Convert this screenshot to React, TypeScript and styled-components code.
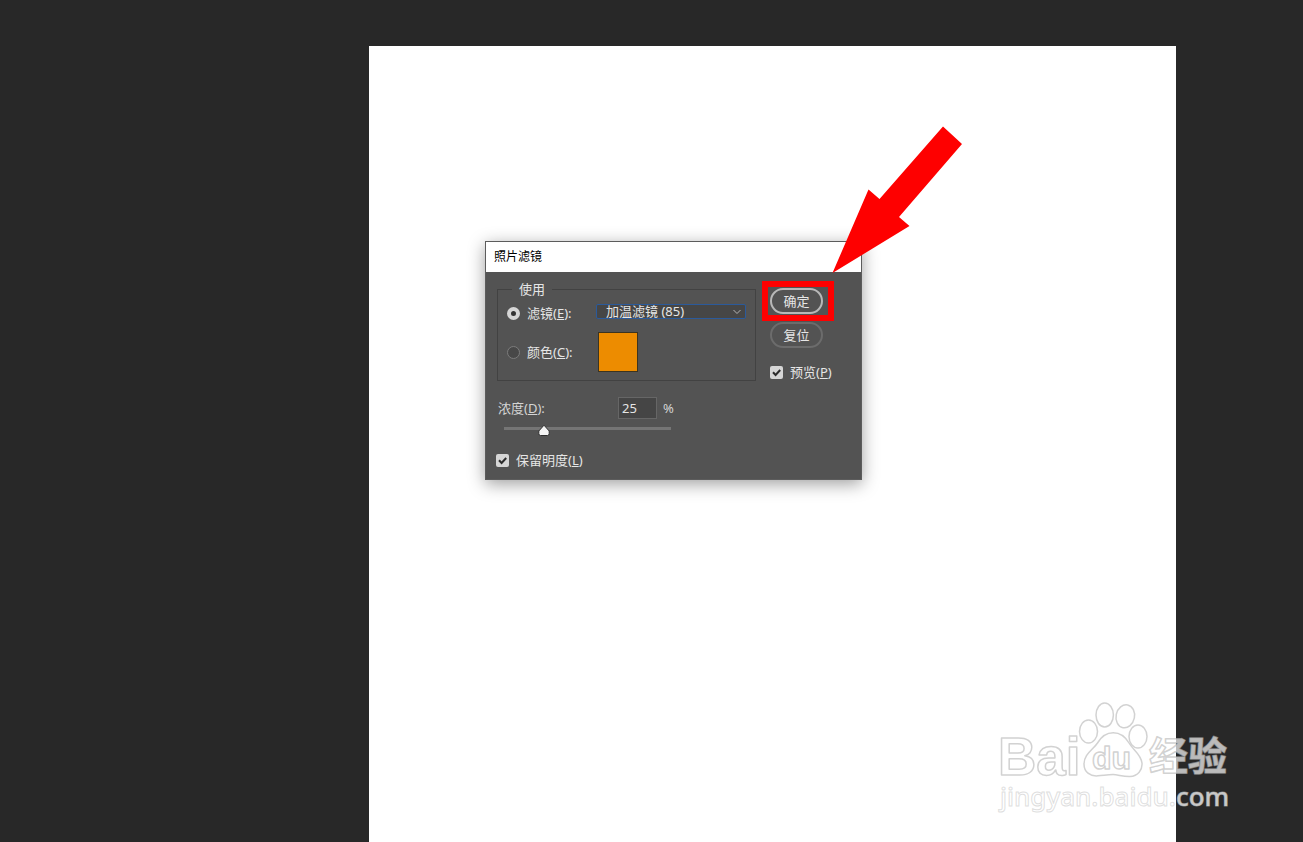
import React, { useState } from "react";
import styled, { createGlobalStyle } from "styled-components";

const GlobalStyle = createGlobalStyle`
  *, *::before, *::after { box-sizing: border-box; }
  body {
    margin: 0;
    background: #282828;
    font-family: "Noto Sans", "Noto Sans CJK SC", sans-serif;
    font-size: 13px;
    line-height: 18px;
  }
  button, input, select { font: inherit; color: inherit; margin: 0; }
`;

const Workspace = styled.main`
  position: relative;
  display: flex;
  min-height: 100vh;
  padding: 46px 127px 0 369px;
  background: #282828;
  overflow: hidden;
`;

const Artboard = styled.section`
  flex: 1;
  padding: 195px 0 0 116px;
  background: #fff;
`;

const Dialog = styled.div`
  position: relative;
  width: 377px;
  border: 1px solid #5c5c5c;
  background: #535353;
  color: #e6e6e6;
  box-shadow: 0 4px 16px rgba(0, 0, 0, 0.38);
`;

const TitleBar = styled.h1`
  margin: 0;
  padding: 0 8px;
  background: #fff;
  color: #000;
  font-size: 12px;
  font-weight: 400;
  line-height: 30px;
`;

const Body = styled.form`
  display: flex;
  gap: 14px;
  padding: 8px 10px 10px;
`;

const Settings = styled.div`
  width: 260px;
`;

const Actions = styled.div`
  display: flex;
  flex-direction: column;
  align-items: flex-start;
  padding-top: 8px;
`;

const Group = styled.fieldset`
  display: grid;
  grid-template-columns: 89px auto;
  grid-template-rows: 30px 40px;
  row-gap: 4px;
  justify-content: start;
  align-items: center;
  margin: 0 0 0 1px;
  padding: 0 9px 8px;
  border: 1px solid #424242;
`;

const Legend = styled.legend`
  margin-left: 5px;
  padding: 0 7px;
`;

const Choice = styled.label`
  display: flex;
  align-items: center;
  gap: 7px;
  height: 18px;
  white-space: nowrap;
`;

const Radio = styled.input.attrs({ type: "radio" })`
  appearance: none;
  width: 13px;
  height: 13px;
  border: 1px solid #7c7c7c;
  border-radius: 50%;
  background: #484848;
  &:checked {
    border: 4px solid #d6d6d6;
    background: #333;
  }
`;

const Select = styled.select`
  appearance: none;
  display: block;
  width: 150px;
  height: 15px;
  padding: 0 16px 0 9px;
  border: 1px solid #2b5a9b;
  border-radius: 2px;
  background: #464646;
  line-height: 13px;
  outline: none;
`;

const SelectWrap = styled.div`
  position: relative;
  align-self: start;
  padding-top: 6px;
`;

const Chevron = styled.svg`
  position: absolute;
  right: 4px;
  bottom: 3px;
  pointer-events: none;
`;

const Swatch = styled.button`
  width: 40px;
  height: 40px;
  margin-left: 2px;
  padding: 0;
  border: 1px solid #3c3420;
  background: #ed8c00;
`;

const DensityRow = styled.div`
  display: grid;
  grid-template-columns: 120px 39px auto;
  align-items: center;
  margin-top: 16px;
  padding-left: 2px;
  color: #d4d4d4;
`;

const DensityInput = styled.input`
  width: 39px;
  height: 22px;
  padding: 0 3px;
  border: 1px solid #666;
  background: #454545;
  color: #e6e6e6;
`;

const Unit = styled.span`
  padding-left: 6px;
`;

const SliderBox = styled.div`
  position: relative;
  width: 167px;
  height: 13px;
  margin: 3px 0 16px 8px;
`;

const Range = styled.input.attrs({ type: "range" })`
  appearance: none;
  display: block;
  width: 100%;
  height: 13px;
  background: linear-gradient(#757575, #757575) center / 100% 3px no-repeat;
  &::-webkit-slider-thumb {
    appearance: none;
    width: 12px;
    height: 13px;
    background: transparent;
  }
`;

const Thumb = styled.svg`
  position: absolute;
  top: 2px;
  margin-left: -5px;
  pointer-events: none;
`;

const Tick = styled.input.attrs({ type: "checkbox" })`
  appearance: none;
  position: absolute;
  inset: 0;
  width: 13px;
  height: 13px;
  border-radius: 2px;
  background: #484848;
  &:checked { background: #d6d6d6; }
`;

const TickBox = styled.span`
  position: relative;
  width: 13px;
  height: 13px;
  svg {
    position: absolute;
    inset: 0;
    pointer-events: none;
  }
`;

const PillButton = styled.button<{ $primary?: boolean }>`
  width: 53px;
  height: 26px;
  margin-bottom: 8px;
  padding: 0;
  border: 2px solid ${(p) => (p.$primary ? "#b8b8b8" : "#6c6c6c")};
  border-radius: 13px;
  background: transparent;
  line-height: 20px;
`;

const PreviewSlot = styled.div`
  margin-top: 7px;
`;

const HighlightBox = styled.div`
  position: absolute;
  left: 276px;
  top: 39px;
  width: 72px;
  height: 40px;
  border: 6px solid #fe0000;
  pointer-events: none;
`;

const Arrow = styled.svg`
  position: absolute;
  left: 346px;
  top: -116px;
  pointer-events: none;
`;

const Watermark = styled.svg`
  position: absolute;
  right: 63px;
  bottom: 22px;
`;

interface CheckBoxProps {
  id: string;
  checked: boolean;
  onChange: (value: boolean) => void;
}

function CheckBox({ id, checked, onChange }: CheckBoxProps) {
  return (
    <TickBox>
      <Tick id={id} checked={checked} onChange={(e) => onChange(e.target.checked)} />
      {checked && (
        <svg width="13" height="13" viewBox="0 0 13 13" fill="none" stroke="#2c2c2c" strokeWidth="2">
          <path d="M3 6.2 5.6 9 10.2 4" />
        </svg>
      )}
    </TickBox>
  );
}

function BaiduMark() {
  return (
    <Watermark width="260" height="130" viewBox="0 0 260 130" aria-label="Baidu">
      <g fill="#fff" fillOpacity="0.7" stroke="#b4b4b4" strokeOpacity="0.6" strokeWidth="1.5" strokeLinejoin="round">
        <ellipse cx="108.5" cy="41.5" rx="9" ry="11.5" />
        <ellipse cx="124.7" cy="25" rx="8.7" ry="12" />
        <ellipse cx="145.3" cy="26.3" rx="9.2" ry="11.6" transform="rotate(12 145.3 26.3)" />
        <ellipse cx="158" cy="46.5" rx="9" ry="11.5" />
        <path d="M133.3 42.7C126 42.7 121 47 117.5 53C113 60 104 64 104 74C104 82 110 86.5 118 85.8C124 85.300 128 84.500 133 84.500C138 84.500 143 86.800 150 86.500C158 86 162.500 80 162 73C161 64 153 60 149 53C145.500 47 141 42.700 133.300 42.700Z" />
        <text x="18" y="85" fontFamily='"Liberation Sans", sans-serif' fontWeight="700" fontSize="53">Bai</text>
        <text x="112" y="79" fontFamily='"Liberation Sans", sans-serif' fontWeight="700" fontSize="32">du</text>
        <text x="169" y="80" fontFamily='"Noto Sans CJK SC", sans-serif' fontWeight="700" fontSize="39">经验</text>
      </g>
      <g fill="#fff" fillOpacity="0.75" stroke="#c4c4c4" strokeOpacity="0.55">
        <text x="20" y="116" fontFamily='"Noto Sans", sans-serif' fontWeight="500" fontSize="26">jingyan.baidu.com</text>
      </g>
    </Watermark>
  );
}

export default function App() {
  const [mode, setMode] = useState("filter");
  const [density, setDensity] = useState(25);
  const [preview, setPreview] = useState(true);
  const [keep, setKeep] = useState(true);

  return (
    <>
      <GlobalStyle />
      <Workspace lang="zh-CN">
        <Artboard>
          <Dialog role="dialog" aria-labelledby="dialog-title">
            <TitleBar id="dialog-title">照片滤镜</TitleBar>
            <Body onSubmit={(e) => e.preventDefault()}>
              <Settings>
                <Group>
                  <Legend>使用</Legend>
                  <Choice>
                    <Radio name="mode" checked={mode === "filter"} onChange={() => setMode("filter")} />
                    <span>滤镜(<u>E</u>):</span>
                  </Choice>
                  <SelectWrap>
                    <Select aria-label="滤镜" defaultValue="85">
                      <option value="85">加温滤镜 (85)</option>
                    </Select>
                    <Chevron width="10" height="8" viewBox="0 0 10 8" fill="none" stroke="#b4b4b4">
                      <path d="M1.500 2 5 5.500 8.500 2" />
                    </Chevron>
                  </SelectWrap>
                  <Choice>
                    <Radio name="mode" checked={mode === "color"} onChange={() => setMode("color")} />
                    <span>颜色(<u>C</u>):</span>
                  </Choice>
                  <Swatch type="button" aria-label="颜色" />
                </Group>
                <DensityRow>
                  <label htmlFor="density">浓度(<u>D</u>):</label>
                  <DensityInput
                    id="density"
                    value={density}
                    onChange={(e) => setDensity(Math.min(100, Number(e.target.value) || 0))}
                  />
                  <Unit>%</Unit>
                </DensityRow>
                <SliderBox>
                  <Range
                    aria-label="浓度"
                    min={0}
                    max={100}
                    value={density}
                    onChange={(e) => setDensity(Number(e.target.value))}
                  />
                  <Thumb
                    width="14"
                    height="13"
                    viewBox="0 0 14 13"
                    style={{ left: Math.floor((density / 100) * 155) }}
                  >
                    <path d="M7 1.200 12.200 7V9.500Q12.200 11.500 10.500 11.500H3.500Q1.800 11.500 1.800 9.500V7Z" fill="#f4f4f4" stroke="#2e2e2e" />
                  </Thumb>
                </SliderBox>
                <Choice htmlFor="keep">
                  <CheckBox id="keep" checked={keep} onChange={setKeep} />
                  <span>保留明度(<u>L</u>)</span>
                </Choice>
              </Settings>
              <Actions>
                <PillButton type="submit" $primary>确定</PillButton>
                <PillButton type="reset">复位</PillButton>
                <PreviewSlot>
                  <Choice htmlFor="preview">
                    <CheckBox id="preview" checked={preview} onChange={setPreview} />
                    <span>预览(<u>P</u>)</span>
                  </Choice>
                </PreviewSlot>
              </Actions>
            </Body>
            <HighlightBox />
            <Arrow width="132" height="148" viewBox="0 0 132 148" fill="#fe0000">
              <path d="M0.500 147 36.500 63.500 47.500 73 111 0.500 130 18 67 91 77.500 100Z" />
            </Arrow>
          </Dialog>
        </Artboard>
        <BaiduMark />
      </Workspace>
    </>
  );
}
